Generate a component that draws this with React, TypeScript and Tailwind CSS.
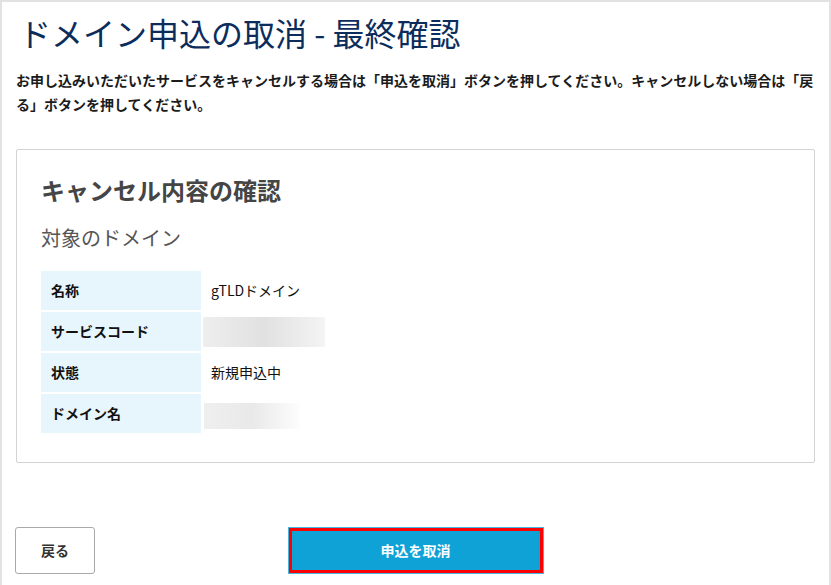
const FONT = { fontFamily: '"Noto Sans CJK JP", "Noto Sans", sans-serif' };

const ROWS: { label: string; value?: string; blur?: 'code' | 'domain' }[] = [
    { label: '名称', value: 'gTLDドメイン' },
    { label: 'サービスコード', blur: 'code' },
    { label: '状態', value: '新規申込中' },
    { label: 'ドメイン名', blur: 'domain' },
];

export default function App() {
    return (
        <div className="w-[831px] h-[585px] overflow-hidden bg-white [text-spacing-trim:space-all]" style={FONT}>
            <div className="h-full border-t-2 border-x-2 border-[#e2e2e2] px-[14px]">
                {/* Page title */}
                <h1 className="mt-[12px] text-[32px] leading-[36px] text-[#0c2d5c] pl-[3px]">
                    ドメイン申込の取消 - 最終確認
                </h1>

                <p className="mt-[18px] text-[14px] leading-[24px] font-bold text-[#1b1b1b]">
                    お申し込みいただいたサービスをキャンセルする場合は「申込を取消」ボタンを押してください。キャンセルしない場合は「戻る」ボタンを押してください。
                </p>

                {/* Confirmation card */}
                <section className="mt-[33px] border border-[#d3d3d3] rounded-[2px] px-6 pt-6 pb-[29px]">
                    <h2 className="text-[24px] leading-[32px] font-bold text-[#454545]">キャンセル内容の確認</h2>
                    <h3 className="mt-[18px] text-[20px] leading-[28px] text-[#555]">対象のドメイン</h3>

                    <div className="mt-[19px] flex flex-col gap-[2px]">
                        {ROWS.map((row) => (
                            <div key={row.label} className="flex h-[39px]">
                                <div className="w-[160px] bg-[#e7f5fc] pl-[10px] flex items-center text-[14px] font-bold text-[#111]">
                                    {row.label}
                                </div>
                                <div className="flex-1 ml-[2px] flex items-center text-[14px] text-[#111]">
                                    {row.value && <span className="pl-[8px]">{row.value}</span>}
                                    {row.blur === 'code' && (
                                        <div className="w-[122px] h-[30px] rounded-[2px] bg-gradient-to-r from-[#eeeeee] via-[#e1e1e1] to-[#f4f4f4]" />
                                    )}
                                    {row.blur === 'domain' && (
                                        <div className="ml-[1px] mt-[5px] w-[96px] h-[26px] bg-gradient-to-r from-[#efefef] via-[#e9e9e9] to-[#fdfdfd]" />
                                    )}
                                </div>
                            </div>
                        ))}
                    </div>
                </section>

                {/* Actions */}
                <div className="mt-[64px] grid grid-cols-[1fr_auto_1fr] items-center">
                    <div>
                        <button className="-ml-px w-[80px] h-[47px] border border-[#a9a9ad] rounded-[3px] bg-white text-[14px] font-bold text-[#333]">
                            戻る
                        </button>
                    </div>
                    <button className="w-[256px] h-[47px] border border-[#45b6e2] bg-[#0ea2d6] shadow-[inset_0_0_0_3px_#ff0000] text-[14px] font-bold text-white">
                        申込を取消
                    </button>
                    <div />
                </div>
            </div>
        </div>
    );
}
